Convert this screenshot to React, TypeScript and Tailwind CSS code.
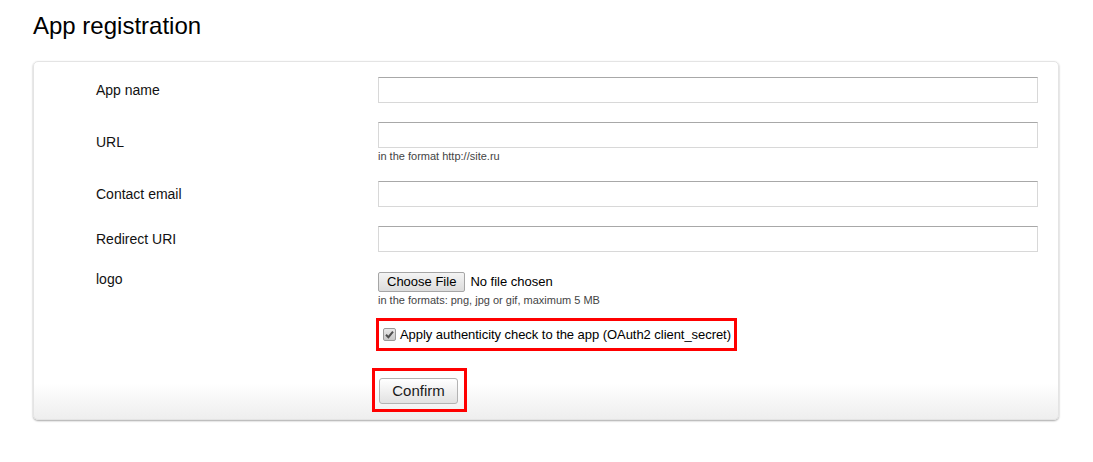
export default function App() {
  const fields = [
    { label: 'App name' },
    { label: 'URL', hint: 'in the format http://site.ru' },
    { label: 'Contact email' },
    { label: 'Redirect URI' },
  ];

  return (
    <div className="min-h-[462px] bg-white pl-[33px] pr-[34px] pt-[12px] font-['Liberation_Sans',Arial,sans-serif] text-[#111]">
      <h1 className="text-[24px] leading-[28px] font-normal text-black">App registration</h1>

      {/* Form card */}
      <div className="mt-[21px] rounded-[5px] border border-[#e4e4e4] bg-linear-to-b from-white from-[90%] to-[#eeeeee] pt-[15px] pb-[7px] shadow-[0_1px_2px_rgba(0,0,0,0.35)]">
        <div className="flex flex-col gap-[19px]">
          {fields.map((f) => (
            <div key={f.label} className="flex items-center">
              <label className="w-[344px] shrink-0 pl-[62px] text-[14px] leading-[16px]">{f.label}</label>
              <div className="flex flex-col">
                <div className="h-[26px] w-[660px] border border-[#d8d8d8] border-t-[#a8a8a8] bg-white"></div>
                {f.hint && (
                  <span className="pt-[2px] text-[11px] leading-[12px] text-[#444]">{f.hint}</span>
                )}
              </div>
            </div>
          ))}

          {/* Logo upload */}
          <div className="mt-[1px] flex items-start">
            <label className="w-[344px] shrink-0 pl-[62px] text-[14px] leading-[16px] -mt-[1px]">logo</label>
            <div className="flex flex-col">
              <div className="flex items-center">
                <span className="flex h-[20px] items-center rounded-[2px] border border-[#a6a6a6] bg-linear-to-b from-[#f4f4f4] to-[#dcdcdc] px-[8px] text-[13px] text-black">
                  Choose File
                </span>
                <span className="ml-[5px] text-[13px] leading-[16px] text-black">No file chosen</span>
              </div>
              <span className="pt-[2px] text-[11px] leading-[12px] text-[#444]">
                in the formats: png, jpg or gif, maximum 5 MB
              </span>
            </div>
          </div>
        </div>

        {/* Client secret checkbox */}
        <div className="mt-[12px] pl-[342px]">
          <div className="inline-flex h-[33px] items-center gap-[4px] border-[3px] border-[#ff0000] pl-[4px] pr-[3px]">
            <span className="flex h-[13px] w-[13px] items-center justify-center rounded-[2px] border border-[#9a9a9a] bg-linear-to-b from-[#e8e8e8] to-[#c8c8c8]">
              <svg width="9" height="9" viewBox="0 0 9 9">
                <path d="M1 4.8 L3.4 7.2 L8 1.6" stroke="#505050" strokeWidth="2" fill="none" />
              </svg>
            </span>
            <span className="text-[13px] leading-[16px] tracking-[-0.05px] text-black">Apply authenticity check to the app (OAuth2 client_secret)</span>
          </div>
        </div>

        {/* Confirm */}
        <div className="mt-[17px] pl-[338px]">
          <div className="inline-flex border-[3px] border-[#ff0000] pl-[4px] pr-[6px] pt-[7px] pb-[5px]">
            <button className="h-[26px] w-[79px] rounded-[3px] border border-[#b3b3b3] bg-linear-to-b from-white to-[#e2e2e2] text-[15px] text-[#1a1a1a]">
              Confirm
            </button>
          </div>
        </div>
      </div>
    </div>
  );
}
